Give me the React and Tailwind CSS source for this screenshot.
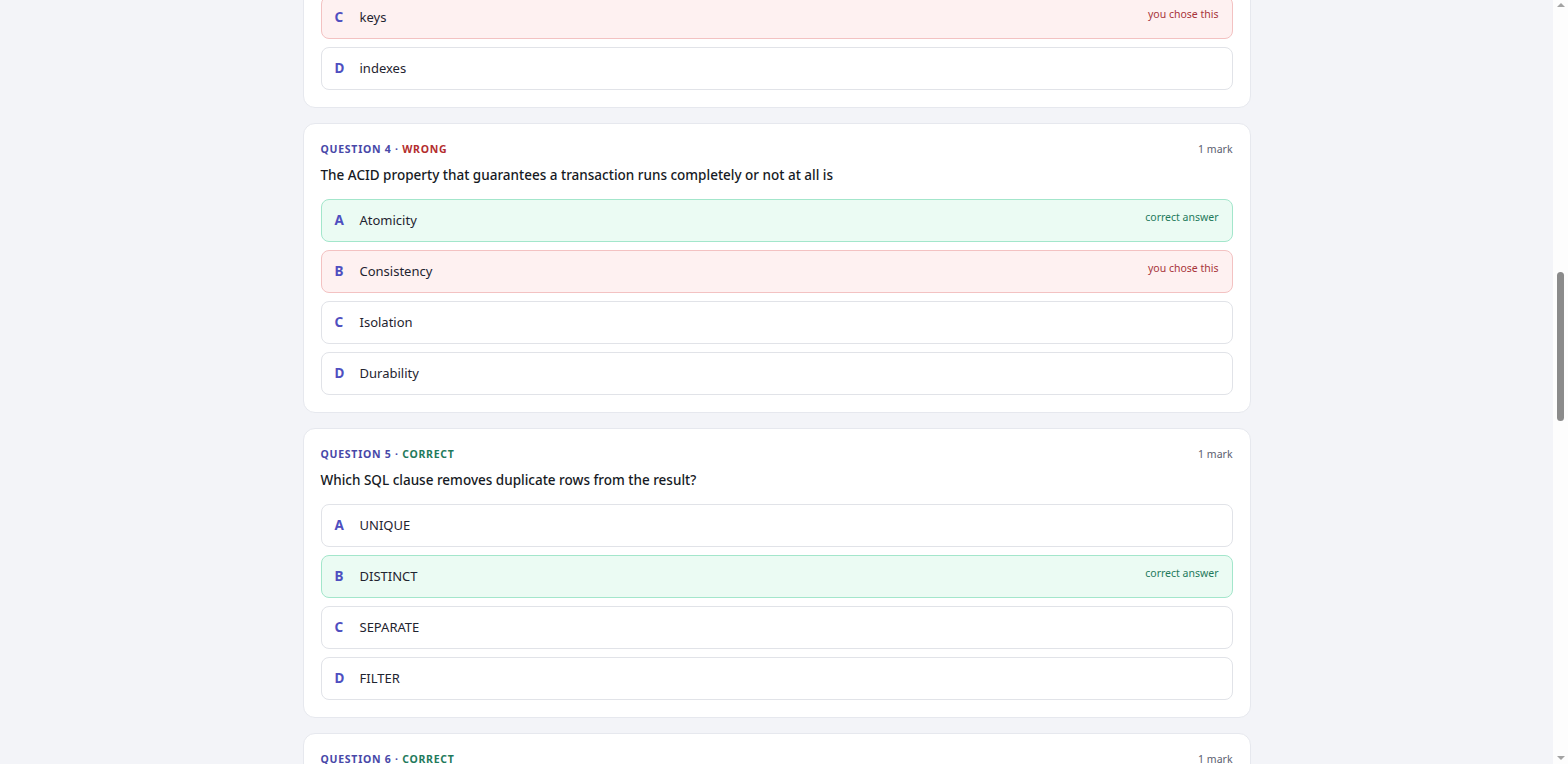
const questions = [
  {
    n: 3,
    status: 'wrong',
    text: 'In the relational model, data is organised into',
    correct: 'A',
    chosen: 'C',
    options: ['tables', 'files', 'keys', 'indexes'],
  },
  {
    n: 4,
    status: 'wrong',
    text: 'The ACID property that guarantees a transaction runs completely or not at all is',
    correct: 'A',
    chosen: 'B',
    options: ['Atomicity', 'Consistency', 'Isolation', 'Durability'],
  },
  {
    n: 5,
    status: 'correct',
    text: 'Which SQL clause removes duplicate rows from the result?',
    correct: 'B',
    chosen: 'B',
    options: ['UNIQUE', 'DISTINCT', 'SEPARATE', 'FILTER'],
  },
  {
    n: 6,
    status: 'correct',
    text: 'Which normal form removes partial dependencies?',
    correct: 'B',
    chosen: 'B',
    options: ['1NF', '2NF', '3NF', 'BCNF'],
  },
]

const letters = ['A', 'B', 'C', 'D']

function Option({ letter, label, correct, chosen }) {
  let box = 'bg-white border-[#e1e3e8]'
  let note = null
  if (correct) {
    box = 'bg-[#ebfbf3] border-[#a3e6cb]'
    note = <span className="text-[10.5px] text-[#1f7a5c] -translate-y-[3px]">correct answer</span>
  } else if (chosen) {
    box = 'bg-[#fef1f1] border-[#f3c2c2]'
    note = <span className="text-[10.5px] text-[#a8343a] -translate-y-[3px]">you chose this</span>
  }
  return (
    <div className={`h-[43px] flex items-center px-[13px] rounded-lg border ${box}`}>
      <span className="w-[25px] text-[13.5px] font-bold text-[#4f4fc0]">{letter}</span>
      <span className="flex-1 text-[13px] text-[#1f2430]">{label}</span>
      {note}
    </div>
  )
}

function QuestionCard({ q }) {
  const ok = q.status === 'correct'
  return (
    <div className="bg-white border border-[#e6e8ee] rounded-xl p-[17px]">
      <div className="h-[18px] flex items-center justify-between">
        <span className="text-[10.5px] font-bold tracking-[0.07em] text-[#4848a8]">
          QUESTION {q.n} ·{' '}
          <span className={ok ? 'text-[#1f7a5c]' : 'text-[#b32d2d]'}>{ok ? 'CORRECT' : 'WRONG'}</span>
        </span>
        <span className="text-[10.5px] text-[#5b6070]">1 mark</span>
      </div>
      <p className="mt-[4px] leading-[24px] text-[13.5px] font-medium text-[#161a24]">{q.text}</p>
      <div className="mt-[12px] flex flex-col gap-2">
        {q.options.map((opt, i) => (
          <Option
            key={i}
            letter={letters[i]}
            label={opt}
            correct={letters[i] === q.correct}
            chosen={letters[i] === q.chosen}
          />
        ))}
      </div>
    </div>
  )
}

export default function App() {
  return (
    <div
      className="h-[764px] flex overflow-hidden bg-[#f3f4f8]"
      style={{ fontFamily: '"Segoe UI", "Noto Sans", "Open Sans", sans-serif' }}
    >
      <main className="flex-1 overflow-hidden">
        <div className="w-[948px] mx-auto -mt-[182px] flex flex-col gap-[15px]">
          {questions.map((q) => (
            <QuestionCard key={q.n} q={q} />
          ))}
        </div>
      </main>
      <div className="w-[15px] bg-[#fdfdfd] flex flex-col items-center">
        <div className="mt-[3px] w-0 h-0 border-l-[4px] border-r-[4px] border-b-[4px] border-l-transparent border-r-transparent border-b-[#a3a3a3]" />
        <div className="h-[265px]" />
        <div className="w-[7px] h-[149px] rounded-full bg-[#8b8b8b]" />
        <div className="flex-1" />
        <div className="mb-[4px] w-0 h-0 border-l-[4px] border-r-[4px] border-t-[4px] border-l-transparent border-r-transparent border-t-[#a3a3a3]" />
      </div>
    </div>
  )
}
